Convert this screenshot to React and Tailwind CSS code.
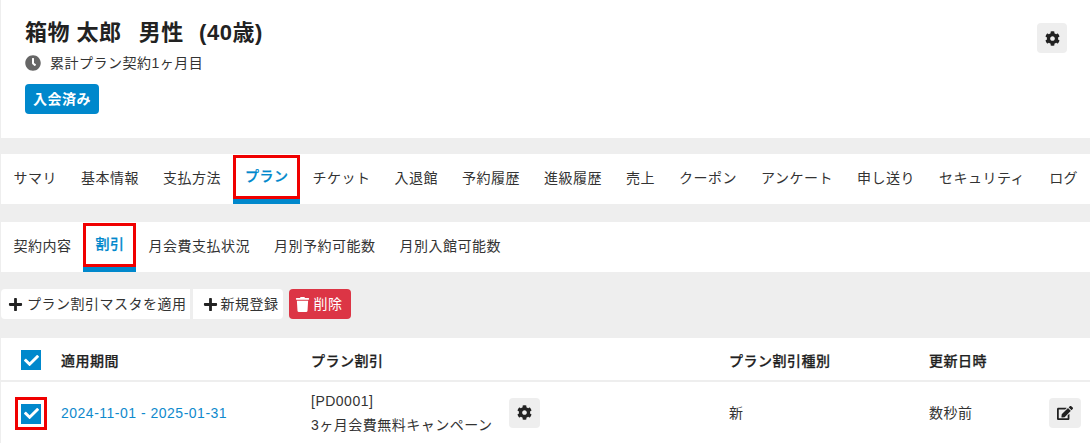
import { FaCheck, FaClock, FaCog, FaEdit, FaPlus, FaTrash } from 'react-icons/fa';

const FONT = "font-['Liberation_Sans','Noto_Sans_CJK_JP',sans-serif]";

const mainTabs = ['サマリ', '基本情報', '支払方法', 'プラン', 'チケット', '入退館', '予約履歴', '進級履歴', '売上', 'クーポン', 'アンケート', '申し送り', 'セキュリティ', 'ログ'];
const subTabs = ['契約内容', '割引', '月会費支払状況', '月別予約可能数', '月別入館可能数'];

function TabBar({ tabs, active }) {
  return (
    <div className="flex h-[50px] bg-white whitespace-nowrap overflow-hidden">
      {tabs.map((tab) => (
        <div
          key={tab}
          className={`relative flex items-center pl-[12.5px] pr-[11.5px] pb-[2px] shrink-0 ${tab === active ? 'font-medium [-webkit-text-stroke:0.25px] text-[#0088cc] border-b-[5px] border-[#0088cc] pb-0' : ''}`}
        >
          {tab}
          {tab === active && (
            <div className="absolute left-0 right-0 top-px bottom-0 border-[3px] border-[#f00000]" />
          )}
        </div>
      ))}
    </div>
  );
}

function Checkbox() {
  return (
    <div className="flex items-center justify-center w-5 h-5 bg-[#0088cc]">
      <FaCheck className="text-white text-[15px]" />
    </div>
  );
}

function IconButton({ className, children }) {
  return (
    <button className={`flex items-center justify-center h-[30px] rounded bg-[#eeeeee] text-[#222] text-[15px] ${className}`}>
      {children}
    </button>
  );
}

export default function App() {
  return (
    <div className={`${FONT} w-[1090px] h-[443px] overflow-hidden bg-[#eeeeee] pl-px text-sm tracking-[0.5px] text-[#333]`}>
      <div className="flex justify-between h-[138px] bg-white pl-6 pr-[23px] pt-[18px]">
        <div>
          <h1 className="text-[22px] font-bold leading-[30px] text-[#222]">
            箱物 太郎&nbsp;&nbsp;<span className="ml-1">男性</span>&nbsp;&nbsp;<span className="ml-[2px]">(40歳)</span>
          </h1>
          <div className="flex items-center gap-[9px] mt-[5px] h-5">
            <FaClock className="text-[#666] text-base" />
            累計プラン契約1ヶ月目
          </div>
          <div className="inline-flex items-center mt-[11px] h-[30px] px-2 rounded bg-[#0088cc] font-bold text-white">入会済み</div>
        </div>
        <div className="mt-[5px]">
          <IconButton className="w-[30px]"><FaCog /></IconButton>
        </div>
      </div>

      <div className="mt-4">
        <TabBar tabs={mainTabs} active="プラン" />
      </div>
      <div className="mt-[18px]">
        <TabBar tabs={subTabs} active="割引" />
      </div>

      <div className="flex items-center gap-[3px] h-[66px] pb-[2px] text-[#333]">
        <button className="flex items-center gap-1 h-[30px] pl-[7px] pr-[3px] rounded-l bg-white tracking-[0.5px]">
          <FaPlus className="text-[#222] text-[15px]" />プラン割引マスタを適用
        </button>
        <button className="flex items-center gap-[3px] h-[30px] pl-[10px] pr-[4px] rounded-r bg-white tracking-[0.5px]">
          <FaPlus className="text-[#222] text-[15px]" />新規登録
        </button>
        <button className="flex items-center gap-1 h-[30px] ml-[3px] pl-[6px] pr-2 rounded bg-[#dc3545] text-white tracking-[0.5px]">
          <FaTrash className="text-[15px]" />削除
        </button>
      </div>

      <div className="bg-white">
        <div className="grid grid-cols-[60px_250px_418px_200px_1fr] items-center h-[44px] pt-[2px] border-b-2 border-[#eeeeee] font-medium [-webkit-text-stroke:0.25px] text-[#222]">
          <div className="pl-5"><Checkbox /></div>
          <div className="pt-px">適用期間</div>
          <div className="pt-px">プラン割引</div>
          <div className="pt-px">プラン割引種別</div>
          <div className="pt-px">更新日時</div>
        </div>
        <div className="grid grid-cols-[60px_250px_418px_200px_1fr] items-center h-[61px]">
          <div className="relative pl-5 pt-[2px]">
            <Checkbox />
            <div className="absolute left-[14px] -top-[5px] w-8 h-[33px] border-[3px] border-[#f00000]" />
          </div>
          <div className="text-[#0f8acd]">2024-11-01 - 2025-01-31</div>
          <div className="flex items-center gap-4">
            <div className="leading-[24px]">
              <div>[PD0001]</div>
              <div>3ヶ月会費無料キャンペーン</div>
            </div>
            <IconButton className="w-[31px]"><FaCog /></IconButton>
          </div>
          <div>新</div>
          <div className="flex items-center justify-between pr-[9px]">
            数秒前
            <IconButton className="w-8"><FaEdit className="text-base" /></IconButton>
          </div>
        </div>
      </div>
    </div>
  );
}
